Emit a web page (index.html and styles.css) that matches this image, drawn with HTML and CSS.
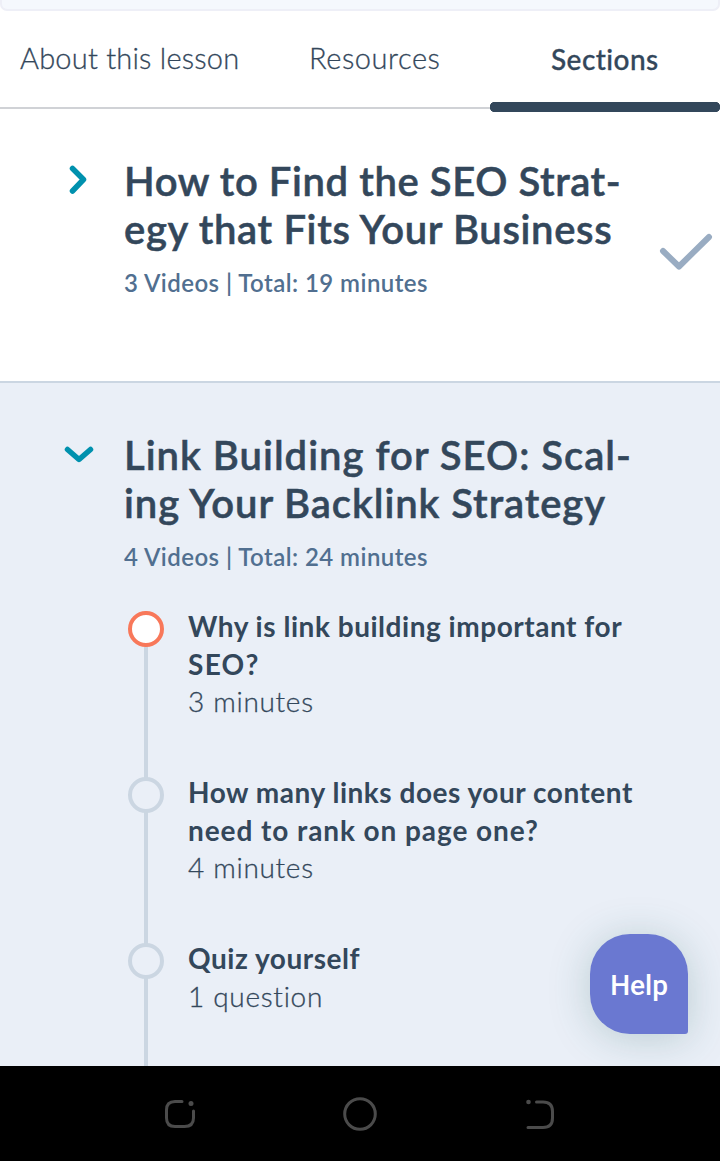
FILE: index.html
```html
<!DOCTYPE html>
<html lang="en">
<head>
<meta charset="utf-8">
<title>Lesson sections</title>
<link rel="stylesheet" href="styles.css">
</head>
<body>
<div class="screen">
  <div class="player-edge"></div>
  <nav class="tabs">
    <a class="tab tab-about"><span class="t-about">About this lesson</span></a>
    <a class="tab tab-resources"><span class="t-resources">Resources</span></a>
    <a class="tab tab-active"><span class="t-sections">Sections</span></a>
  </nav>
  <section class="lesson">
    <svg class="chevron" viewBox="0 0 32 32"><path d="M10.500 4.500 21.500 15.500 10.500 27"/></svg>
    <div class="lesson-body">
      <h2 class="title"><span class="l1">How to Find the SEO Strat-</span><br><span class="l2">egy that Fits Your Business</span></h2>
      <p class="meta">3 Videos | Total: 19 minutes</p>
    </div>
    <svg class="check" viewBox="0 0 54 38"><path d="M4 18 20 33.500 50 4"/></svg>
  </section>
  <section class="lesson lesson-open">
    <svg class="chevron" viewBox="0 0 32 32"><path d="M5.500 11.500 17 21.500 28.500 11.500"/></svg>
    <div class="lesson-body">
      <h2 class="title"><span class="l3">Link Building for SEO: Scal-</span><br><span class="l4">ing Your Backlink Strategy</span></h2>
      <p class="meta">4 Videos | Total: 24 minutes</p>
      <ol class="steps">
        <li class="step">
          <div class="rail"><i class="dot dot-current"></i></div>
          <div class="step-text"><b class="s1">Why is link building important for</b><b class="s2">SEO?</b><span>3 minutes</span></div>
        </li>
        <li class="step">
          <div class="rail"><i class="dot"></i></div>
          <div class="step-text"><b class="s3">How many links does your content</b><b class="s4">need to rank on page one?</b><span>4 minutes</span></div>
        </li>
        <li class="step">
          <div class="rail"><i class="dot"></i></div>
          <div class="step-text"><b class="s5">Quiz yourself</b><span>1 question</span></div>
        </li>
      </ol>
    </div>
  </section>
  <button class="help">Help</button>
  <footer class="navbar">
    <svg viewBox="0 0 36 36"><path d="M20 5.500H13Q4.500 5.500 4.500 14V22Q4.500 30.500 13 30.500H22.500Q31.500 30.500 31.500 22V15"/><circle class="fill" cx="29" cy="7.500" r="2.500"/></svg>
    <svg viewBox="0 0 36 36"><circle cx="18" cy="18" r="15.300"/></svg>
    <svg viewBox="0 0 36 36"><path d="M14.500 6H21Q30.500 6 30.500 15.500V22Q30.500 31.500 21 31.500H6"/><circle class="fill" cx="6.500" cy="6" r="2.300"/></svg>
  </footer>
</div>
</body>
</html>
```
FILE: styles.css
```css
* { box-sizing: border-box; }
body { margin: 0; background: #fff; color: #33475b; font-family: Lato, "Liberation Sans", sans-serif; }
.screen { position: relative; display: flex; flex-direction: column; width: 720px; height: 1161px; overflow: hidden; }
.player-edge { height: 11px; flex: none; background: #f5f8fd; border: 2px solid #eeeff7; border-top: 0; border-radius: 0 0 7px 7px; }
.tabs { display: flex; flex: none; height: 101px; background: linear-gradient(#d0d2d6, #d0d2d6) 0 96px / 100% 2px no-repeat; font-size: 29px; line-height: 36px; font-weight: 300; white-space: nowrap; -webkit-text-stroke: .3px; }
.tab { display: block; padding-top: 29px; }
.tab-about { width: 260px; padding-left: 20px; letter-spacing: .22px; }
.tab-resources { width: 230px; padding-left: 49px; letter-spacing: .55px; }
/* Round-capped underline beneath the selected tab */
.tab-active { width: 230px; padding: 30px 0 0 61px; font-weight: 500; font-size: 28px; letter-spacing: .45px; background: radial-gradient(circle at 5px 5px, #33475b 5px, transparent 5.500px) 0 91px / 10px 10px no-repeat, radial-gradient(circle at 5px 5px, #33475b 5px, transparent 5.500px) 220px 91px / 10px 10px no-repeat, linear-gradient(#33475b, #33475b) 5px 91px / 220px 10px no-repeat; }
.lesson { display: flex; flex: none; height: 271px; padding: 45px 0 0 62px; border-bottom: 2px solid #cbd6e2; }
.lesson-open { flex: 1; min-height: 0; height: auto; padding-top: 48px; border: 0; background: #eaeff7; overflow: hidden; }
.chevron { width: 32px; height: 32px; margin-top: 7px; flex: none; fill: none; stroke: #0091ae; stroke-width: 5.500; stroke-linecap: round; stroke-linejoin: round; }
.lesson-body { width: 530px; margin-left: 30px; flex: none; white-space: nowrap; }
.title { margin: 0; font-size: 40px; line-height: 48px; font-weight: 600; -webkit-text-stroke: .5px; }
.l1 { letter-spacing: .58px; }
.l2 { letter-spacing: .65px; }
.l3 { letter-spacing: 1px; }
.l4 { letter-spacing: .92px; }
.meta { margin: 14px 0 0; font-size: 24px; line-height: 32px; font-weight: 600; letter-spacing: .45px; color: #516f90; }
.check { width: 54px; height: 38px; margin: 76px 0 0 5px; flex: none; fill: none; stroke: #99acc2; stroke-width: 6; stroke-linecap: round; stroke-linejoin: round; }
.steps { list-style: none; margin: 38px 0 0; padding: 0 0 0 4px; }
.step { display: flex; height: 166px; }
.rail { width: 36px; margin-right: 24px; background: linear-gradient(#cbd6e2, #cbd6e2) 16px 0 / 4px 100% no-repeat; }
.dot { display: block; width: 36px; height: 36px; border: 4px solid #cbd6e2; border-radius: 50%; background: #eaeff7; }
.dot-current { border-color: #f8785a; background: #fff; }
.step-text { display: flex; flex-direction: column; align-items: flex-start; margin-top: -3px; font-size: 28px; line-height: 37.500px; font-weight: 300; }
.step-text b { font-weight: 700; }
.step-text span { letter-spacing: .7px; -webkit-text-stroke: .3px; }
.s1, .s3, .s5 { letter-spacing: .53px; }
.s2 { letter-spacing: 1.300px; }
.s4 { letter-spacing: .92px; }
.help { position: absolute; left: 590px; top: 934px; width: 98px; height: 100px; padding: 3px 0 0; border: 0; border-radius: 40px 40px 3px 40px; background: #6a78d1; box-shadow: 0 4px 40px rgba(45, 105, 105, .25); color: #fff; font: 500 28px/34px Roboto, sans-serif; }
.navbar { position: relative; display: flex; flex: none; justify-content: space-between; align-items: center; height: 95px; padding: 0 162px; background: #000; }
.navbar svg { width: 36px; height: 36px; fill: none; stroke: #4b4b4b; stroke-width: 3; stroke-linecap: round; }
.navbar .fill { fill: #4b4b4b; stroke: none; }
```
